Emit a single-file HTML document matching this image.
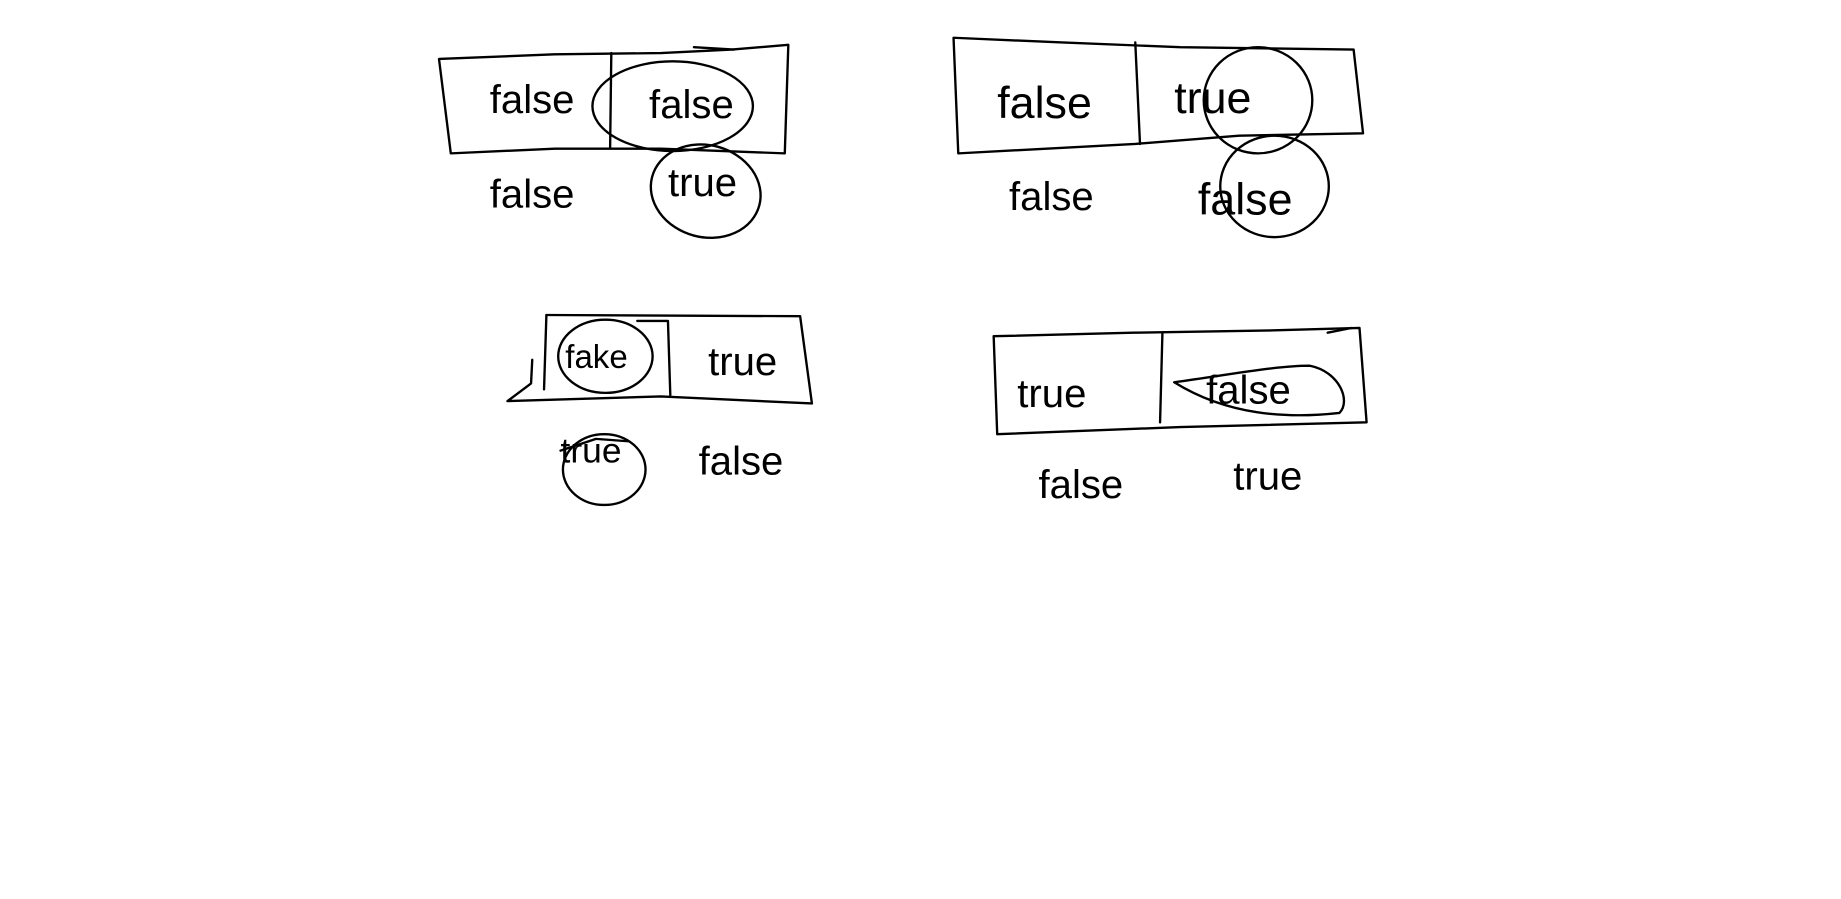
<!DOCTYPE html>
<html><head><meta charset="utf-8"><style>
html,body{margin:0;padding:0;background:#fff;width:1841px;height:899px;overflow:hidden}
svg{display:block}
text{font-family:"Liberation Sans",sans-serif;font-size:34px;fill:#000}
</style></head><body>
<svg width="1841" height="899" viewBox="0 0 1560 762" preserveAspectRatio="none" xmlns="http://www.w3.org/2000/svg">
<g fill="none" stroke="#000" stroke-width="2" stroke-linecap="round" stroke-linejoin="round">
<!-- box 1 -->
<path d="M372,50 L470,46 L560,45 L620,42 L668,38 L665,130 L560,126 L470,126 L382,130 Z"/>
<path d="M588,40 L622,42"/>
<path d="M518,45 L517,125"/>
<ellipse cx="570" cy="90" rx="68" ry="38"/>
<ellipse cx="598" cy="162" rx="47" ry="39" transform="rotate(15 598 162)"/>
<!-- box 2 -->
<path d="M808,32 L900,36 L1000,40 L1147,42 L1155,113 L1050,115 L962,122 L812,130 Z"/>
<path d="M962,36 L966,122"/>
<ellipse cx="1066" cy="85" rx="46" ry="45"/>
<ellipse cx="1080" cy="158" rx="46" ry="43"/>
<!-- box 3 -->
<path d="M463,267 L678,268 L688,342 L560,336 L430,340 L450,325 L451,305"/>
<path d="M463,267 L461,330"/>
<path d="M540,272 L566,272 L568,335"/>
<ellipse cx="513" cy="302" rx="40" ry="31"/>
<ellipse cx="512" cy="398" rx="35" ry="30"/>
<path d="M475,382 L505,372 L532,374"/>
<!-- box 4 -->
<path d="M842,285 L960,282 L1080,280 L1152,278 L1158,358 L1000,362 L845,368 Z"/>
<path d="M1125,282 L1145,278"/>
<path d="M985,282 L983,358"/>
<path d="M995,324 C1040,318 1080,310 1110,310 C1135,315 1145,340 1135,350 C1090,355 1040,352 995,324 Z"/>
</g>
<text x="415" y="96">false</text>
<text x="550" y="100">false</text>
<text x="415" y="176">false</text>
<text x="566" y="166">true</text>
<text x="845" y="100" style="font-size:38px">false</text>
<text x="995" y="96" style="font-size:38px">true</text>
<text x="855" y="178">false</text>
<text x="1015" y="182" style="font-size:38px">false</text>
<text x="479" y="312" style="font-size:28px">fake</text>
<text x="600" y="318">true</text>
<text x="475" y="392" style="font-size:30px">true</text>
<text x="592" y="402">false</text>
<text x="862" y="345">true</text>
<text x="1022" y="342">false</text>
<text x="880" y="422">false</text>
<text x="1045" y="415">true</text>
</svg>
</body></html>
